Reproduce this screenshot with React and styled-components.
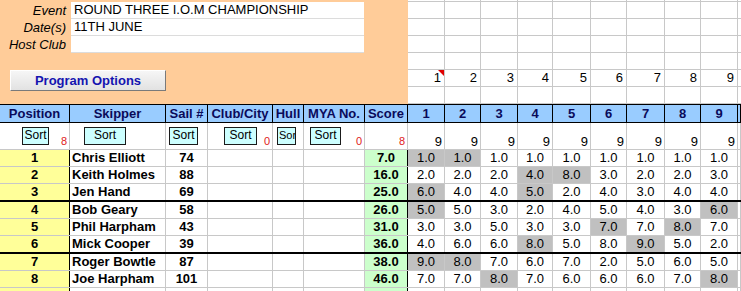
import React from 'react';
import styled, { createGlobalStyle } from 'styled-components';

const RACE_WIDTHS = [37, 36, 37, 35, 38, 36, 38, 36, 37];
const COLS = `70px 96px 42px 65px 31px 61px 43px ${RACE_WIDTHS.map((w) => w + 'px').join(' ')} 1fr`;
const TOP_COLS = `408px ${RACE_WIDTHS.map((w) => w + 'px').join(' ')} 1fr`;
const GRID = '#c8c8c8';

const GlobalStyle = createGlobalStyle`
  *, *::before, *::after {
    box-sizing: border-box;
  }
  body {
    margin: 0;
    background: #fff;
    font-family: "Liberation Sans", Arial, sans-serif;
  }
`;

const Sheet = styled.div`
  width: 741px;
  height: 291px;
  overflow: hidden;
  font-size: 13px;
  color: #000;
`;

const TopGrid = styled.div`
  display: grid;
  grid-template-columns: ${TOP_COLS};
  grid-template-rows: 2px repeat(6, 17px);
`;

const InfoPanel = styled.div`
  grid-column: 1;
  grid-row: 1 / -1;
  background: #ffcc99;
  padding-top: 2px;
  display: flex;
  flex-direction: column;
`;

const InfoRow = styled.div`
  display: grid;
  grid-template-columns: 71px 293px;
  height: 17px;
`;

const Label = styled.div`
  font-style: italic;
  text-align: right;
  padding-right: 5px;
  line-height: 17px;
`;

const Field = styled.div`
  background: #fff;
  border-bottom: 1px solid #dcdcdc;
  padding-left: 3px;
  line-height: 16px;
`;

const ProgramButton = styled.button`
  margin: 17px 0 0 10px;
  width: 156px;
  height: 21px;
  padding: 0;
  background: linear-gradient(#f6f6f6, #e2e2e2);
  border: 1px solid;
  border-color: #ffffff #7a7a7a #7a7a7a #ffffff;
  color: #1414b0;
  font-family: "Liberation Sans", Arial, sans-serif;
  font-weight: bold;
  font-size: 13px;
`;

const GridCell = styled.div`
  position: relative;
  border-right: 1px solid ${GRID};
  border-bottom: 1px solid ${GRID};
  text-align: right;
  padding-right: 3px;
  line-height: 16px;
`;

const CommentMark = styled.span`
  position: absolute;
  top: 0;
  right: 0;
  width: 0;
  height: 0;
  border-top: 6px solid #e00000;
  border-left: 6px solid transparent;
`;

const HeaderRow = styled.div`
  display: grid;
  grid-template-columns: ${COLS};
  height: 19px;
  background: #99ccff;
  border-top: 1px solid #000;
  border-bottom: 1px solid #000;
`;

const HeaderCell = styled.div`
  border-right: 1px solid #000;
  text-align: center;
  font-weight: bold;
  color: #0a0a5a;
  line-height: 17px;
  white-space: nowrap;
  overflow: hidden;
`;

const SortRow = styled.div`
  display: grid;
  grid-template-columns: ${COLS};
  height: 27px;
  border-bottom: 1px solid ${GRID};
`;

const SortCell = styled.div`
  display: flex;
  align-items: flex-end;
  border-right: 1px solid ${GRID};
  padding-right: 2px;
  overflow: hidden;
`;

const SortButton = styled.div`
  align-self: flex-start;
  margin: 4px 0 0 ${(p) => p.$left}px;
  width: ${(p) => p.$width}px;
  height: 18px;
  flex-shrink: 0;
  background: #ccffff;
  border: 1px solid #1a1a1a;
  font-size: ${(p) => (p.$tight ? 11 : 12)}px;
  line-height: 15px;
  text-align: ${(p) => (p.$tight ? 'left' : 'center')};
  padding-left: ${(p) => (p.$tight ? 1 : 0)}px;
  white-space: nowrap;
  overflow: hidden;
`;

const Count = styled.span`
  margin-left: auto;
  color: ${(p) => (p.$red ? '#e02020' : '#000')};
  font-size: ${(p) => (p.$red ? 11 : 13)}px;
  line-height: 15px;
`;

const DataRow = styled.div`
  display: grid;
  grid-template-columns: ${COLS};
  height: ${(p) => (p.$thick ? 18 : 17)}px;
  border-bottom: ${(p) => (p.$thick ? '2px solid #000' : `1px solid ${GRID}`)};
`;

const kinds = {
  pos: 'background: #ffff99; font-weight: bold; text-align: center;',
  name: 'font-weight: bold; text-align: left; padding-left: 2px;',
  sail: 'font-weight: bold; text-align: center;',
  blank: '',
  score: 'background: #ccffcc; font-weight: bold; text-align: center;',
  race: 'text-align: center;',
};

const Cell = styled.div`
  border-right: 1px solid ${(p) => (p.$edge ? '#000' : GRID)};
  line-height: 16px;
  white-space: nowrap;
  overflow: hidden;
  ${(p) => kinds[p.$kind]}
  ${(p) => (p.$discard ? 'background: #c0c0c0;' : '')}
`;

const headers = ['Position', 'Skipper', 'Sail #', 'Club/City', 'Hull', 'MYA No.', 'Score'];

const sorts = [
  { left: 22, width: 27, count: '8' },
  { left: 14, width: 42 },
  { left: 3, width: 29 },
  { left: 16, width: 33, count: '0' },
  { left: 4, width: 19, label: 'Sor' },
  { left: 6, width: 31, count: '0' },
  null,
];

const results = [
  ['1', 'Chris Elliott', '74', '7.0', [1, 1, 1, 1, 1, 1, 1, 1, 1], [0, 1]],
  ['2', 'Keith Holmes', '88', '16.0', [2, 2, 2, 4, 8, 3, 2, 2, 3], [3, 4]],
  ['3', 'Jen Hand', '69', '25.0', [6, 4, 4, 5, 2, 4, 3, 4, 4], [0, 3]],
  ['4', 'Bob Geary', '58', '26.0', [5, 5, 3, 2, 4, 5, 4, 3, 6], [0, 8]],
  ['5', 'Phil Harpham', '43', '31.0', [3, 3, 5, 3, 3, 7, 7, 8, 7], [5, 7]],
  ['6', 'Mick Cooper', '39', '36.0', [4, 6, 6, 8, 5, 8, 9, 5, 2], [3, 6]],
  ['7', 'Roger Bowtle', '87', '38.0', [9, 8, 7, 6, 7, 2, 5, 6, 5], [0, 1]],
  ['8', 'Joe Harpham', '101', '46.0', [7, 7, 8, 7, 6, 6, 6, 7, 8], [2, 8]],
];

const races = [1, 2, 3, 4, 5, 6, 7, 8, 9];

export default function App() {
  return (
    <Sheet>
      <GlobalStyle />
      <TopGrid>
        <InfoPanel>
          <InfoRow>
            <Label>Event</Label>
            <Field>ROUND THREE I.O.M CHAMPIONSHIP</Field>
          </InfoRow>
          <InfoRow>
            <Label>Date(s)</Label>
            <Field>11TH JUNE</Field>
          </InfoRow>
          <InfoRow>
            <Label>Host Club</Label>
            <Field />
          </InfoRow>
          <ProgramButton>Program Options</ProgramButton>
        </InfoPanel>
        {Array.from({ length: 7 }).map((_, r) =>
          [...races, 0].map((n, c) => (
            <GridCell key={`${r}-${c}`}>
              {r === 5 && n > 0 ? n : ''}
              {r === 5 && n === 1 && <CommentMark />}
            </GridCell>
          ))
        )}
      </TopGrid>

      <HeaderRow>
        {headers.map((h) => (
          <HeaderCell key={h}>{h}</HeaderCell>
        ))}
        {races.map((n) => (
          <HeaderCell key={n}>{n}</HeaderCell>
        ))}
        <HeaderCell />
      </HeaderRow>

      <SortRow>
        {sorts.map((s, i) => (
          <SortCell key={i}>
            {s && (
              <SortButton $left={s.left} $width={s.width} $tight={!!s.label}>
                {s.label || 'Sort'}
              </SortButton>
            )}
            {s && s.count && <Count $red>{s.count}</Count>}
            {i === 6 && <Count $red>8</Count>}
          </SortCell>
        ))}
        {races.map((n) => (
          <SortCell key={'r' + n}>
            <Count>9</Count>
          </SortCell>
        ))}
        <SortCell />
      </SortRow>

      {results.map(([pos, name, sail, score, vals, discards], i) => (
        <DataRow key={pos} $thick={i === 2 || i === 5}>
          <Cell $kind="pos" $edge>{pos}</Cell>
          <Cell $kind="name">{name}</Cell>
          <Cell $kind="sail">{sail}</Cell>
          <Cell $kind="blank" />
          <Cell $kind="blank" />
          <Cell $kind="blank" />
          <Cell $kind="score" $edge>{score}</Cell>
          {vals.map((v, j) => (
            <Cell key={j} $kind="race" $discard={discards.includes(j)}>
              {v.toFixed(1)}
            </Cell>
          ))}
          <Cell $kind="blank" />
        </DataRow>
      ))}
      <DataRow>
        <Cell $kind="pos" $edge />
        <Cell $kind="blank" />
        <Cell $kind="blank" />
        <Cell $kind="blank" />
        <Cell $kind="blank" />
        <Cell $kind="blank" />
        <Cell $kind="score" $edge />
        {races.map((n) => (
          <Cell key={n} $kind="race" />
        ))}
        <Cell $kind="blank" />
      </DataRow>
    </Sheet>
  );
}
